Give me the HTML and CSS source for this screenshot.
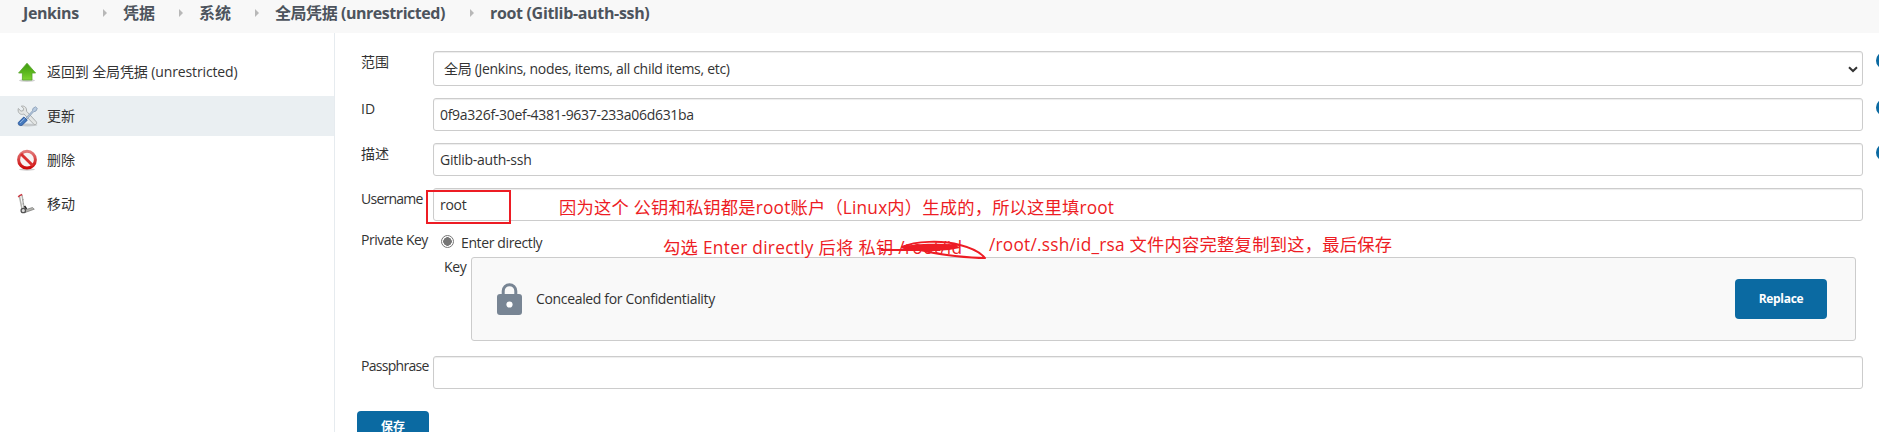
FILE: index.html
```html
<!DOCTYPE html>
<html lang="zh-CN">
<head>
<meta charset="utf-8">
<title>root (Gitlib-auth-ssh) [Jenkins]</title>
<link rel="stylesheet" href="styles.css">
</head>
<body>
<nav class="crumbs">
  <span class="crumb crumb-home">Jenkins</span><i class="sep"></i>
  <span class="crumb crumb-short">凭据</span><i class="sep"></i>
  <span class="crumb crumb-short">系统</span><i class="sep"></i>
  <span class="crumb crumb-domain">全局凭据 (unrestricted)</span><i class="sep"></i>
  <span class="crumb crumb-current">root (Gitlib-auth-ssh)</span>
</nav>
<div class="page">
  <aside class="side">
    <a class="task">
      <svg class="icon" viewBox="0 0 24 24"><defs><linearGradient id="gr" x2="0" y2="1"><stop offset="0" stop-color="#3f9a10"/><stop offset=".5" stop-color="#59b51c"/><stop offset="1" stop-color="#7ed431"/></linearGradient></defs><ellipse cx="12" cy="20.6" rx="8" ry="1.4" fill="#000" opacity=".18"/><path d="M12 3.2 20.6 13H17v7H7.4v-7H3.6z" fill="url(#gr)" stroke="#55a329" stroke-width=".8"/></svg>
      <span class="task-back">返回到 全局凭据 (unrestricted)</span>
    </a>
    <a class="task task-active">
      <svg class="icon" viewBox="0 0 24 24"><ellipse cx="12.500" cy="21" rx="10" ry="1.500" fill="#000" opacity=".16"/><path d="M3.300 4.500 6 7.200 8.200 6.600 8.600 4.300 6.300 2.200C9.500 1.300 12 3.800 11.500 7.200L21.300 17.800c1.200 1.800-.8 3.600-2.500 2.400L8.900 10C5.500 11.500 2.200 8.600 3.300 4.500z" fill="#e3e5e4" stroke="#a5a8a8" stroke-width=".9"/><path d="m10.500 14.500 7-7.700.4-2.300 2.500-1.700 1.900 1.600-1.300 2.600-2.500.8-6.700 7.500z" fill="#b9cbe0" stroke="#8298b3" stroke-width=".8"/><path d="m8.800 13 3.500 3.200-5.200 5c-1.800 1.300-4.800-.9-3.600-2.900z" fill="#4579bd" stroke="#27549a" stroke-width=".9"/><path d="m5 19 4.800-4.600" stroke="#91b4df" stroke-width="1"/></svg>
      <span>更新</span>
    </a>
    <a class="task">
      <svg class="icon" viewBox="0 0 24 24"><defs><linearGradient id="rd" x2="0" y2="1"><stop offset="0" stop-color="#e27a7a"/><stop offset="1" stop-color="#cc0808"/></linearGradient></defs><ellipse cx="12" cy="21.500" rx="8" ry="1.200" fill="#000" opacity=".2"/><circle cx="12" cy="11.700" r="8.400" fill="#f7f3f3" stroke="url(#rd)" stroke-width="3"/><path d="m6 6 12 11.700" stroke="#d93030" stroke-width="3"/></svg>
      <span>删除</span>
    </a>
    <a class="task">
      <svg class="icon" viewBox="0 0 24 24"><path d="M7 3 9.200 17M4.500 4.500 7 17" stroke="#b3b3af" stroke-width="1.500" fill="none"/><path d="M3.200 5 4.600 3.600 7.200 2.500" stroke="#ca3a43" stroke-width="1.500" fill="none"/><path d="m7 8 1.500-.5M7.500 12l1.500-.5" stroke="#999" stroke-width="1"/><path d="M8 18.500 17.500 15.500 19.300 17.200 10 20.500z" fill="#b5b5b0" stroke="#777" stroke-width=".7"/><path d="m9.500 14 2 3" stroke="#222" stroke-width="1.600"/><circle cx="8.300" cy="18.500" r="2.200" fill="#ddd" stroke="#555" stroke-width="1.300"/></svg>
      <span>移动</span>
    </a>
  </aside>
  <main class="form">
    <div class="row row-scope"><label class="label">范围</label><div class="field select"><span class="scope-text">全局 (Jenkins, nodes, items, all child items, etc)</span><svg class="chevron" viewBox="0 0 10 7"><path d="m1 1.200 4 3.800 4-3.800" fill="none" stroke="#333" stroke-width="2"/></svg></div><i class="help"></i></div>
    <div class="row"><label class="label">ID</label><div class="field"><span class="id-text">0f9a326f-30ef-4381-9637-233a06d631ba</span></div><i class="help"></i></div>
    <div class="row"><label class="label">描述</label><div class="field"><span class="desc-text">Gitlib-auth-ssh</span></div><i class="help"></i></div>
    <div class="row"><label class="label label-user">Username</label><div class="field"><span class="user-text">root</span></div></div>
    <div class="row row-key">
      <label class="label label-private">Private Key</label>
      <div class="key-source">
        <div class="choice"><i class="radio"></i><span class="choice-text">Enter directly</span></div>
        <div class="key-entry">
          <label class="label-key">Key</label>
          <div class="secret">
            <svg class="lock" viewBox="0 0 25 32"><path d="M6.200 12V8a6.300 6.300 0 0 1 12.600 0v4" fill="none" stroke="#788594" stroke-width="3"/><rect y="11" width="25" height="21" rx="3" fill="#788594"/><circle cx="12.500" cy="21.500" r="3.100" fill="#fff"/></svg>
            <span class="secret-text">Concealed for Confidentiality</span>
            <button class="button replace"><span>Replace</span></button>
          </div>
        </div>
      </div>
    </div>
    <div class="row"><label class="label label-pass">Passphrase</label><div class="field"></div></div>
    <button class="button save">保存</button>
  </main>
</div>
<svg class="notes" viewBox="0 0 1879 432">
  <rect x="427" y="191" width="83" height="32" fill="none" stroke="#ed1c24" stroke-width="2"/>
  <text x="559" y="214" textLength="555">因为这个 公钥和私钥都是root账户（Linux内）生成的，所以这里填root</text>
  <text x="663" y="254" textLength="299">勾选 Enter directly 后将 私钥 /root/id</text>
  <text x="989" y="251" textLength="403">/root/.ssh/id_rsa 文件内容完整复制到这，最后保存</text>
  <path d="M881 250H940" class="scribble"/>
  <path d="M902 247 C915 241 942 240 960 245 C972 248 981 253 985 258 C972 258 938 255 925 251 C909 247 902 249 902 247 L956 245 L908 249" class="scribble"/>
  <path d="M903 247 C914 243 939 243 956 245 L960 248 L949 250 L935 251 L914 249z" fill="#ed1c24"/>
</svg>
</body>
</html>
```
FILE: styles.css
```css
* { box-sizing: border-box; }
html { overflow: hidden; }
body {
  margin: 0;
  height: 432px;
  overflow: hidden;
  position: relative;
  background: #fff;
  color: #333;
  font: 14px/20px "Open Sans", "Noto Sans CJK SC", sans-serif;
}
.crumbs {
  display: flex;
  align-items: center;
  height: 33px;
  padding: 0 0 7px 23px;
  background: #f8f8f8;
  color: #4d545d;
  font-size: 16px;
  font-weight: 700;
  white-space: nowrap;
}
.crumb-home { width: 56px; letter-spacing: -.4px; }
.crumb-short { width: 32px; }
.crumb-domain { width: 171px; letter-spacing: -.45px; }
.crumb-current { letter-spacing: -.33px; }
.sep {
  margin: 0 16px 0 24px;
  border-left: 4px solid #b8b8b8;
  border-top: 4px solid transparent;
  border-bottom: 4px solid transparent;
}
.page { display: flex; height: 399px; }
.side {
  display: flex;
  flex-direction: column;
  gap: 4px;
  width: 335px;
  flex: none;
  padding-top: 19px;
  border-right: 1px solid #e6ebef;
}
.task {
  display: flex;
  align-items: center;
  gap: 8px;
  height: 40px;
  padding-left: 15px;
}
.task-active { background: #eaeff2; }
.task-back { letter-spacing: -.12px; }
.icon { width: 24px; height: 24px; }
.form { flex: none; width: 1544px; padding: 18px 0 0 22px; overflow: hidden; }
.row { display: flex; align-items: flex-start; height: 33px; margin-bottom: 12px; padding-left: 4px; }
.row-scope { height: 35px; }
.label { width: 72px; flex: none; padding-top: 1px; white-space: nowrap; }
.label-user { letter-spacing: -.75px; }
.label-private { margin-top: -4px; letter-spacing: -.5px; }
.label-pass { padding-top: 0; letter-spacing: -.7px; }
.field {
  display: flex;
  align-items: center;
  width: 1430px;
  height: 100%;
  flex: none;
  padding: 0 6px;
  border: 1px solid #ccc;
  border-radius: 3px;
  background: #fff;
  box-shadow: inset 0 1px 1px rgba(0, 0, 0, .075);
}
.select { justify-content: space-between; padding: 1px 4px 0 10px; }
.chevron { width: 10px; height: 7px; }
.help { flex: none; width: 17px; height: 17px; margin: 1px 0 0 13px; border-radius: 50%; background: #0b6aa2; }
.row-key { height: 108px; margin-bottom: 15px; }
.key-source { width: 1430px; }
.choice { display: flex; align-items: flex-start; gap: 7px; height: 24px; padding-left: 8px; }
.radio {
  width: 13px;
  height: 13px;
  margin-top: 2px;
  border: 1px solid #767676;
  border-radius: 50%;
  background: radial-gradient(circle, #767676 0 4px, #fff 4.5px);
}
.key-entry { display: flex; padding-left: 11px; }
.label-key { width: 27px; letter-spacing: -.3px; }
.secret {
  display: flex;
  align-items: center;
  width: 1385px;
  height: 84px;
  padding: 0 28px 0 25px;
  border: 1px solid #ccc;
  border-radius: 3px;
  background: #f9f9f9;
}
.lock { width: 25px; height: 32px; margin-right: 14px; }
.button {
  border: 0;
  border-radius: 4px;
  background: #0b6aa2;
  color: #fff;
  font: 700 12px/20px "Open Sans", "Noto Sans CJK SC", sans-serif;
}
.replace { width: 92px; height: 40px; margin-left: auto; letter-spacing: -.3px; }
.save { display: block; width: 72px; height: 32px; margin-top: 22px; }
.scope-text, .id-text, .user-text { letter-spacing: -.3px; }
.desc-text { letter-spacing: -.25px; }
.secret-text { letter-spacing: -.34px; }
.choice-text { letter-spacing: -.38px; }
.notes { position: absolute; left: 0; top: 0; width: 1879px; height: 432px; pointer-events: none; }
.notes text { fill: #ed1c24; font: 17.3px "Open Sans", "Noto Sans CJK SC", sans-serif; }
.scribble { fill: none; stroke: #ed1c24; stroke-width: 2; stroke-linejoin: round; }
```
